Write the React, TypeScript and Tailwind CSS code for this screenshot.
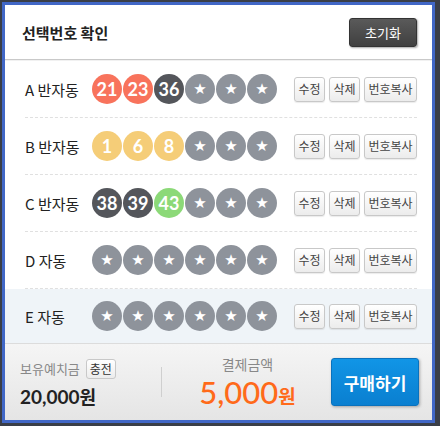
import React from "react";

type Ball = { n?: number; c: string };

const RED = "bg-[#f8735c]";
const DARK = "bg-[#54565b]";
const GRAY = "bg-[#8e939b]";
const YEL = "bg-[#f5cd78]";
const GRN = "bg-[#8cd978]";

const rows: { label: string; balls: Ball[]; active?: boolean }[] = [
    { label: "A 반자동", balls: [{ n: 21, c: RED }, { n: 23, c: RED }, { n: 36, c: DARK }, { c: GRAY }, { c: GRAY }, { c: GRAY }] },
    { label: "B 반자동", balls: [{ n: 1, c: YEL }, { n: 6, c: YEL }, { n: 8, c: YEL }, { c: GRAY }, { c: GRAY }, { c: GRAY }] },
    { label: "C 반자동", balls: [{ n: 38, c: DARK }, { n: 39, c: DARK }, { n: 43, c: GRN }, { c: GRAY }, { c: GRAY }, { c: GRAY }] },
    { label: "D 자동", balls: [{ c: GRAY }, { c: GRAY }, { c: GRAY }, { c: GRAY }, { c: GRAY }, { c: GRAY }] },
    { label: "E 자동", balls: [{ c: GRAY }, { c: GRAY }, { c: GRAY }, { c: GRAY }, { c: GRAY }, { c: GRAY }], active: true },
];

const kr = "font-['Noto_Sans_CJK_KR','Noto_Sans',sans-serif]";

function SmallButton({ children, w }: { children: React.ReactNode; w: string }) {
    return (
        <button
            className={`${w} h-[25px] flex items-center justify-center rounded-[3px] border border-[#c8c8c8] bg-gradient-to-b from-white to-[#ececec] text-[12px] leading-none text-[#444] shadow-[0_1px_1px_rgba(0,0,0,0.08)]`}
        >
            {children}
        </button>
    );
}

export default function App() {
    return (
        <div className={`w-[440px] h-[426px] bg-[#3a3e47] pl-[2px] pt-[2px] pr-[5px] pb-[3px] ${kr}`}>
            <div className="h-full border-[3px] border-[#4167c6] bg-white flex flex-col">
                {/* header */}
                <div className="h-[55px] shrink-0 flex items-center justify-between pl-[17px] pr-[15px] border-b border-[#c9c9c9]">
                    <h1 className="text-[15px] font-bold text-[#222] leading-none">선택번호 확인</h1>
                    <button className="w-[68px] h-[29px] rounded-[3px] bg-gradient-to-b from-[#5a5a5a] to-[#404040] border border-[#333] text-white text-[13px] leading-none shadow-[1px_1px_2px_rgba(0,0,0,0.35)]">
                        초기화
                    </button>
                </div>
                <div className="h-[1px] bg-[#f1f1f1] shrink-0" />

                {/* rows */}
                {rows.map((row, i) => (
                    <div key={row.label} className={row.active ? "bg-[#eff4f8]" : ""}>
                        <div
                            className={`mx-[20px] mr-[15px] flex items-center ${
                                i < rows.length - 1 ? "h-[57px] border-b border-dashed border-[#e0e0e0]" : "h-[54px]"
                            }`}
                        >
                            <span className="w-[67px] shrink-0 text-[15px] text-[#222] leading-none">{row.label}</span>
                            <div className="flex gap-[1px]">
                                {row.balls.map((b, j) => (
                                    <div
                                        key={j}
                                        className={`w-[30px] h-[30px] rounded-full ${b.c} flex items-center justify-center text-white`}
                                    >
                                        {b.n !== undefined ? (
                                            <span className="font-['Lato',sans-serif] font-bold text-[18px] leading-none">{b.n}</span>
                                        ) : (
                                            <span className="text-[15px] leading-none font-['DejaVu_Sans',sans-serif]">★</span>
                                        )}
                                    </div>
                                ))}
                            </div>
                            <div className="ml-auto flex gap-[4px]">
                                <SmallButton w="w-[31px]">수정</SmallButton>
                                <SmallButton w="w-[31px]">삭제</SmallButton>
                                <SmallButton w="w-[53px]">번호복사</SmallButton>
                            </div>
                        </div>
                    </div>
                ))}

                {/* footer */}
                <div className="flex-1 border-t border-[#dcdcdc] bg-gradient-to-b from-[#f5f5f5] to-[#e5e5e5] flex items-center pl-[15px] pr-[13px]">
                    <div className="w-[141px] flex flex-col gap-[8px]">
                        <div className="flex items-center gap-[6px]">
                            <span className="text-[13px] text-[#888] leading-none">보유예치금</span>
                            <button className="w-[30px] h-[20px] rounded-[3px] border border-[#c8c8c8] bg-gradient-to-b from-white to-[#ececec] text-[12px] text-[#333] leading-none">
                                충전
                            </button>
                        </div>
                        <span className="text-[18px] font-bold text-[#222] leading-none">
                            <span className="font-['Lato',sans-serif] text-[19px]">20,000</span>원
                        </span>
                    </div>
                    <div className="w-[1px] h-[30px] bg-[#cfcfcf]" />
                    <div className="flex-1 flex flex-col items-center gap-[6px] pl-[2px]">
                        <span className="text-[14px] text-[#888] leading-none">결제금액</span>
                        <span className="text-[#ff6a1a] leading-none flex items-baseline">
                            <span className="font-['Lato',sans-serif] font-medium text-[31px]">5,000</span>
                            <span className="text-[19px] font-bold">원</span>
                        </span>
                    </div>
                    <button className="w-[88px] h-[48px] rounded-[3px] bg-gradient-to-b from-[#1195e6] to-[#0a7fd0] border border-[#0a72bd] text-white text-[17px] font-bold leading-none shadow-[1px_1px_3px_rgba(0,0,0,0.3)]">
                        구매하기
                    </button>
                </div>
            </div>
        </div>
    );
}
